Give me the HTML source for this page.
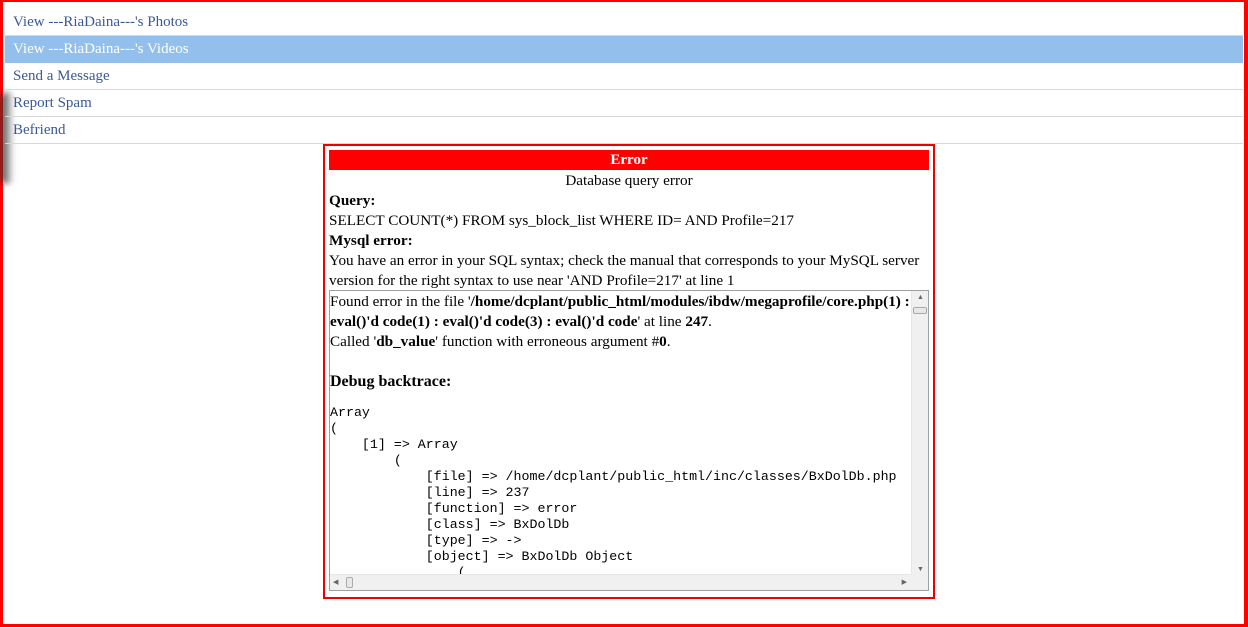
<!DOCTYPE html>
<html><head><meta charset="utf-8"><style>
*{margin:0;padding:0;box-sizing:border-box}
body{width:1248px;height:627px;overflow:hidden;background:#fff;position:relative;font-family:"Liberation Serif",serif}
.frame{position:absolute;left:0;top:0;width:1248px;height:627px;border:3px solid #f00;border-top-width:2px;border-right-width:4px}
.shadow{position:absolute;left:0px;top:92px;width:14px;height:92px;background:linear-gradient(90deg,#333,rgba(0,0,0,0));filter:blur(3px);border-radius:6px}
.menu{position:absolute;left:5px;top:9px;width:1238px}
.menu div{height:27px;line-height:26px;padding-left:8px;font-size:15px;color:#3b5998;border-bottom:1px solid #d8d8d8}
.menu div.hl{background:#92bfec;color:#fff;border-bottom-color:#92bfec}
.box{position:absolute;left:323px;top:144px;width:612px;height:455px;border:2px solid #e00;padding:4px 4px}
.hdr{background:#f00;color:#fff;font-weight:bold;text-align:center;font-size:15px;height:20px;line-height:21px}
.t{font-size:15.2px;line-height:20px;color:#000;white-space:nowrap;position:relative;top:1px}
.sc{position:absolute;left:4px;top:144px;width:600px;height:301px;border:1px solid #a0a0a0;overflow:hidden}
.in{padding:1px 0 0 0;font-size:15.2px;line-height:20px;white-space:nowrap}
pre{font-family:"Liberation Mono",monospace;font-size:13.3px;line-height:16px;margin-top:13px}
.vs{position:absolute;right:0;top:0;width:17px;height:284px;background:#f0f0f0;border-left:1px solid #e6e6e6}
.hs{position:absolute;left:0;bottom:0;width:583px;height:16px;background:#f0f0f0;border-top:1px solid #e6e6e6}
.corner{position:absolute;right:0;bottom:0;width:17px;height:16px;background:#f0f0f0}
.arr{position:absolute;font-size:7px;color:#666}
</style></head><body>
<div class="frame"></div>
<div class="shadow"></div>
<div class="menu">
<div>View ---RiaDaina---'s Photos</div>
<div class="hl">View ---RiaDaina---'s Videos</div>
<div>Send a Message</div>
<div>Report Spam</div>
<div>Befriend</div>
</div>
<div class="box">
<div class="hdr">Error</div>
<div class="t" style="text-align:center">Database query error</div>
<div class="t"><b>Query:</b></div>
<div class="t">SELECT COUNT(*) FROM sys_block_list WHERE ID= AND Profile=217</div>
<div class="t"><b>Mysql error:</b></div>
<div class="t">You have an error in your SQL syntax; check the manual that corresponds to your MySQL server</div>
<div class="t">version for the right syntax to use near 'AND Profile=217' at line 1</div>
<div class="sc"><div class="in">Found error in the file '<b>/home/dcplant/public_html/modules/ibdw/megaprofile/core.php(1) :<br>eval()'d code(1) : eval()'d code(3) : eval()'d code</b>' at line <b>247</b>.<br>Called '<b>db_value</b>' function with erroneous argument #<b>0</b>.<br><br><b style="font-size:16px">Debug backtrace:</b>
<pre>Array
(
    [1] =&gt; Array
        (
            [file] =&gt; /home/dcplant/public_html/inc/classes/BxDolDb.php
            [line] =&gt; 237
            [function] =&gt; error
            [class] =&gt; BxDolDb
            [type] =&gt; -&gt;
            [object] =&gt; BxDolDb Object
                (</pre></div>
<div class="vs"><span class="arr" style="left:5px;top:2px">▲</span><div style="position:absolute;left:1px;top:16px;width:14px;height:7px;border:1px solid #aaa;background:#e8e8e8;border-radius:2px"></div><span class="arr" style="left:5px;bottom:2px">▼</span></div>
<div class="hs"><span class="arr" style="left:3px;top:3px">◀</span><div style="position:absolute;left:16px;top:2px;width:7px;height:11px;border:1px solid #aaa;background:#e8e8e8;border-radius:2px"></div><span class="arr" style="right:6px;top:3px">▶</span></div>
<div class="corner"></div>
</div>
</div>
</body></html>
